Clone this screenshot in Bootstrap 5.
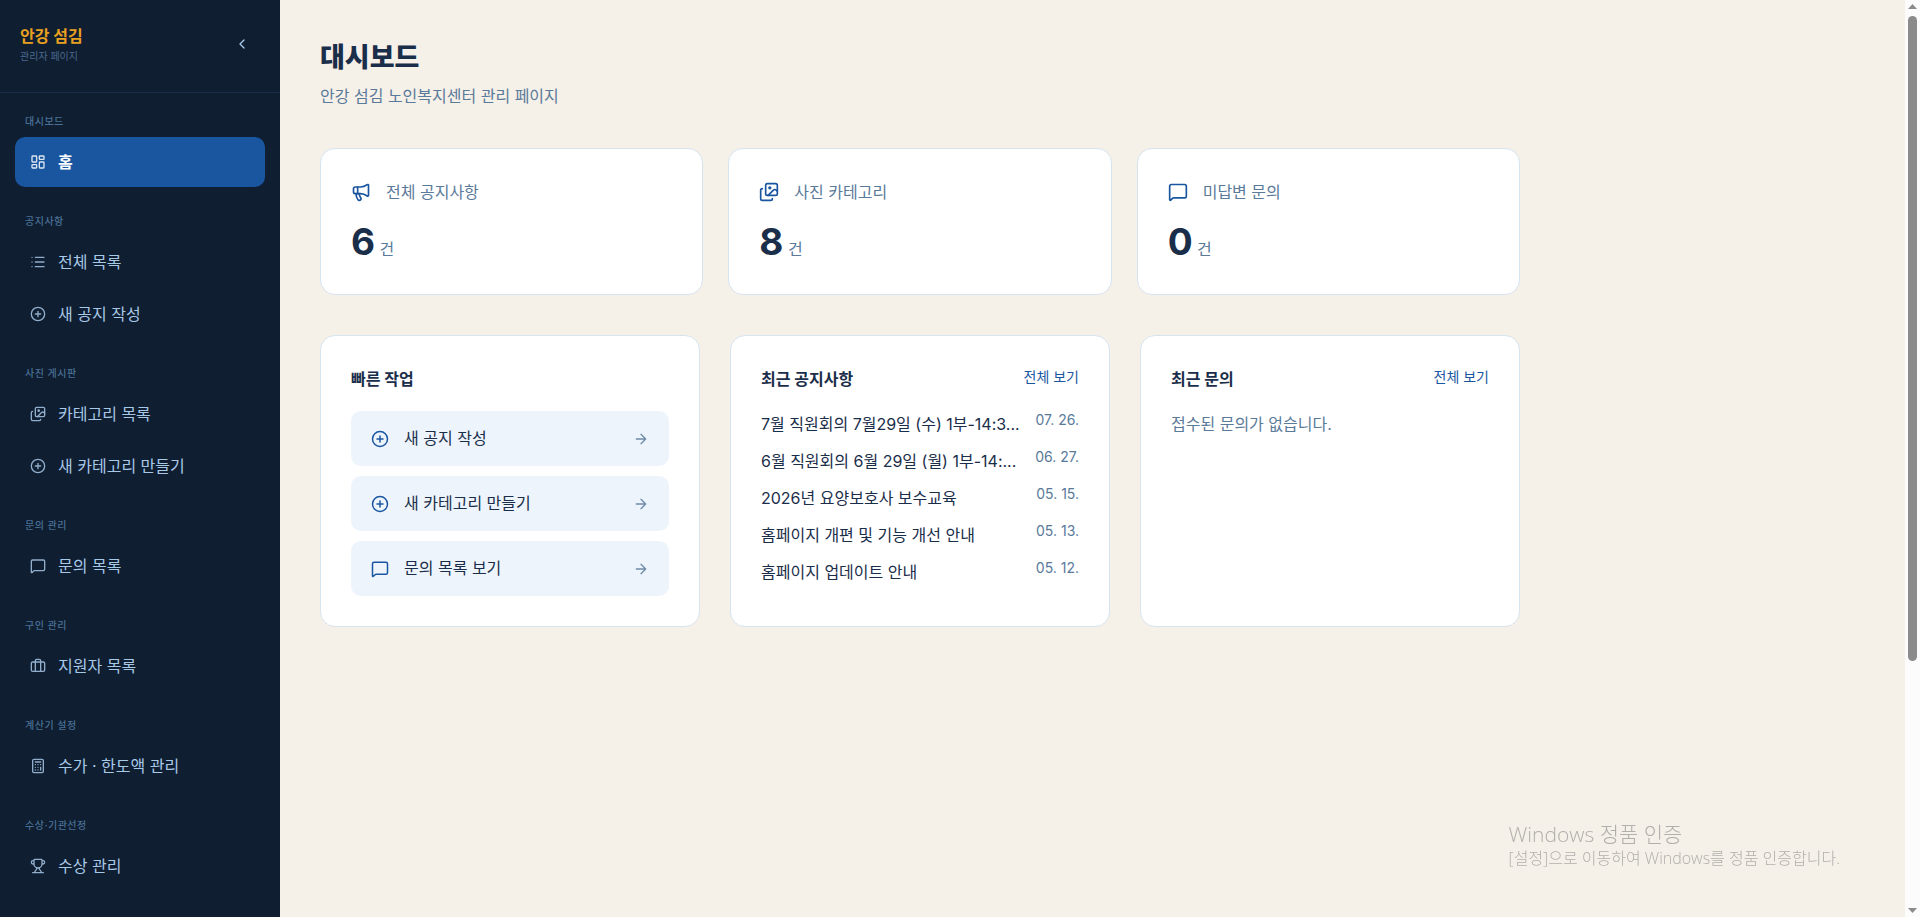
<!DOCTYPE html>
<html lang="ko">
<head>
<meta charset="utf-8">
<meta name="viewport" content="width=device-width, initial-scale=1">
<title>대시보드 - 안강 섬김</title>
<link href="https://cdn.jsdelivr.net/npm/bootstrap@5.3.0/dist/css/bootstrap.min.css" rel="stylesheet">
<style>
  :root { --navy: #1a2e4a; --blue: #1a56a0; --muted: #5a7a9a; --line: #d6e4f0; }
  body { background: #f5f0e8; color: var(--navy); font-family: Inter, "Noto Sans CJK KR", sans-serif; font-size: 16px; line-height: 27px; }
  a { text-decoration: none; }
  .ico { width: 18px; height: 18px; flex: none; fill: none; stroke: currentColor; stroke-width: 2; stroke-linecap: round; stroke-linejoin: round; }
  .ico-sm { width: 16px; height: 16px; }
  .ico-lg { width: 20px; height: 20px; }
  .text-soft { color: var(--muted); }
  .text-blue { color: var(--blue); }

  /* sidebar */
  .sidebar { width: 280px; background: #0f1e30; }
  .sidebar-head { padding: 24px 20px 28px; border-bottom: 1px solid var(--navy); }
  .brand-name { color: #e8a020; font-weight: 700; line-height: 24px; }
  .brand-sub { color: #4a6a90; font-size: 10px; line-height: 16px; }
  .collapse-btn { width: 36px; height: 36px; color: #a8c8e8; }
  .side-nav { padding: 20px 15px 0; }
  .nav-group { margin-bottom: 26px; }
  .nav-title { font-size: 10px; line-height: 16px; letter-spacing: .05em; color: #4a7096; padding-left: 10px; margin-bottom: 8px; font-weight: 500; }
  .side-link { height: 50px; padding: 0 15px; gap: 12px; border-radius: 10px; color: #a8c8e8; }
  .side-link + .side-link { margin-top: 2px; }
  .side-link.active { background: var(--blue); color: #fff; font-weight: 600; }
  .side-link .ico { opacity: .85; }

  /* content */
  .content { padding: 40px; }
  .page-title { font-size: 27px; line-height: 36px; font-weight: 800; margin-bottom: 7px; }
  .page-sub { margin-bottom: 38px; }
  .dash { max-width: 1200px; }
  .tiles { display: grid; grid-template-columns: repeat(3, minmax(0, 1fr)); }
  .tiles-stat { gap: 25px; margin-bottom: 40px; }
  .tiles-panel { gap: 30px; }
  .panel { background: #fff; border: 1px solid var(--line); border-radius: 15px; padding: 30px; }
  .stat-head { gap: 15px; line-height: 26px; margin-bottom: 14px; }
  .stat-num { font-size: 37px; line-height: 45px; font-weight: 700; }
  .panel-head { height: 28px; margin-bottom: 17px; }
  .panel-title { font-size: 16px; line-height: 27px; font-weight: 700; }
  .more-link { font-size: 14px; line-height: 22px; color: var(--blue); }
  .quick { height: 55px; padding: 0 20px; gap: 15px; background: #edf4fc; border-radius: 10px; color: var(--navy); }
  .quick .ms-auto { opacity: .85; }
  .quick-list, .notice-list { gap: 10px; }
  .notice-list a { color: var(--navy); }
  .notice-row { gap: 10px; }
  .notice-date { font-size: 14px; line-height: 18px; }

  /* window scrollbar and system notice */
  .scrollbar-track { width: 15px; background: #fcfcfc; padding: 4px 0; }
  .scrollbar-thumb { width: 9px; height: 71%; margin: 7px 0 auto; border-radius: 5px; background: #8b8b8b; }
  .activation { right: 80px; bottom: 48px; color: #b2b0ad; font-family: "Open Sans", "Noto Sans CJK KR", sans-serif; font-weight: 300; font-size: 16px; line-height: 22px; pointer-events: none; }
  .activation-title { font-size: 21px; line-height: 26px; }
</style>
</head>
<body>
<svg class="d-none" aria-hidden="true">
  <symbol id="i-dash" viewBox="0 0 24 24"><rect x="3" y="3" width="7" height="9" rx="1"/><rect x="14" y="3" width="7" height="5" rx="1"/><rect x="14" y="12" width="7" height="9" rx="1"/><rect x="3" y="16" width="7" height="5" rx="1"/></symbol>
  <symbol id="i-list" viewBox="0 0 24 24"><path d="M3 5h.01M3 12h.01M3 19h.01M8 5h13M8 12h13M8 19h13"/></symbol>
  <symbol id="i-plus" viewBox="0 0 24 24"><circle cx="12" cy="12" r="10"/><path d="M8 12h8M12 8v8"/></symbol>
  <symbol id="i-images" viewBox="0 0 24 24"><path d="m22 11-1.296-1.296a2.4 2.4 0 0 0-3.408 0L11 16"/><path d="M4 8a2 2 0 0 0-2 2v10a2 2 0 0 0 2 2h10a2 2 0 0 0 2-2"/><circle cx="13" cy="7" r="1" fill="currentColor"/><rect x="8" y="2" width="14" height="14" rx="2"/></symbol>
  <symbol id="i-msg" viewBox="0 0 24 24"><path d="M22 17a2 2 0 0 1-2 2H6.828a2 2 0 0 0-1.414.586l-2.202 2.202A.71.71 0 0 1 2 21.286V5a2 2 0 0 1 2-2h16a2 2 0 0 1 2 2z"/></symbol>
  <symbol id="i-case" viewBox="0 0 24 24"><path d="M16 20V4a2 2 0 0 0-2-2h-4a2 2 0 0 0-2 2v16"/><rect x="2" y="6" width="20" height="14" rx="2"/></symbol>
  <symbol id="i-calc" viewBox="0 0 24 24"><rect x="4" y="2" width="16" height="20" rx="2"/><path d="M8 6h8M16 14v4M16 10h.01M12 10h.01M8 10h.01M12 14h.01M8 14h.01M12 18h.01M8 18h.01"/></symbol>
  <symbol id="i-trophy" viewBox="0 0 24 24"><path d="M10 14.66v1.626a2 2 0 0 1-.976 1.696A5 5 0 0 0 7 21.978M14 14.66v1.626a2 2 0 0 0 .976 1.696A5 5 0 0 1 17 21.978M18 9h1.5a1 1 0 0 0 0-5H18M4 22h16M6 9a6 6 0 0 0 12 0V3a1 1 0 0 0-1-1H7a1 1 0 0 0-1 1zM6 9H4.5a1 1 0 0 1 0-5H6"/></symbol>
  <symbol id="i-mega" viewBox="0 0 24 24"><path d="M11 6a13 13 0 0 0 8.4-2.8A1 1 0 0 1 21 4v12a1 1 0 0 1-1.6.8A13 13 0 0 0 11 14H5a2 2 0 0 1-2-2V8a2 2 0 0 1 2-2z"/><path d="M6 14a12 12 0 0 0 2.4 7.2 2 2 0 0 0 3.2-2.4A8 8 0 0 1 10 14M8 6v8"/></symbol>
  <symbol id="i-arrow" viewBox="0 0 24 24"><path d="M5 12h14M12 5l7 7-7 7"/></symbol>
  <symbol id="i-chev" viewBox="0 0 24 24"><path d="m15 18-6-6 6-6"/></symbol>
</svg>

<div class="d-flex vh-100 overflow-hidden">
  <aside class="sidebar flex-shrink-0 overflow-hidden">
    <div class="sidebar-head d-flex justify-content-between align-items-center">
      <div>
        <div class="brand-name">안강 섬김</div>
        <div class="brand-sub">관리자 페이지</div>
      </div>
      <button type="button" class="collapse-btn btn border-0 p-0 d-flex align-items-center justify-content-center" aria-label="메뉴 접기"><svg class="ico ico-sm"><use href="#i-chev"/></svg></button>
    </div>
    <nav class="side-nav">
      <div class="nav-group">
        <div class="nav-title">대시보드</div>
        <a href="#" class="side-link active d-flex align-items-center" aria-current="page"><svg class="ico ico-sm"><use href="#i-dash"/></svg>홈</a>
      </div>
      <div class="nav-group">
        <div class="nav-title">공지사항</div>
        <a href="#" class="side-link d-flex align-items-center"><svg class="ico ico-sm"><use href="#i-list"/></svg>전체 목록</a>
        <a href="#" class="side-link d-flex align-items-center"><svg class="ico ico-sm"><use href="#i-plus"/></svg>새 공지 작성</a>
      </div>
      <div class="nav-group">
        <div class="nav-title">사진 게시판</div>
        <a href="#" class="side-link d-flex align-items-center"><svg class="ico ico-sm"><use href="#i-images"/></svg>카테고리 목록</a>
        <a href="#" class="side-link d-flex align-items-center"><svg class="ico ico-sm"><use href="#i-plus"/></svg>새 카테고리 만들기</a>
      </div>
      <div class="nav-group">
        <div class="nav-title">문의 관리</div>
        <a href="#" class="side-link d-flex align-items-center"><svg class="ico ico-sm"><use href="#i-msg"/></svg>문의 목록</a>
      </div>
      <div class="nav-group">
        <div class="nav-title">구인 관리</div>
        <a href="#" class="side-link d-flex align-items-center"><svg class="ico ico-sm"><use href="#i-case"/></svg>지원자 목록</a>
      </div>
      <div class="nav-group">
        <div class="nav-title">계산기 설정</div>
        <a href="#" class="side-link d-flex align-items-center"><svg class="ico ico-sm"><use href="#i-calc"/></svg>수가 · 한도액 관리</a>
      </div>
      <div class="nav-group">
        <div class="nav-title">수상·기관선정</div>
        <a href="#" class="side-link d-flex align-items-center"><svg class="ico ico-sm"><use href="#i-trophy"/></svg>수상 관리</a>
      </div>
    </nav>
  </aside>

  <main class="content flex-grow-1">
    <div class="dash">
      <h1 class="page-title">대시보드</h1>
      <p class="page-sub text-soft">안강 섬김 노인복지센터 관리 페이지</p>

      <section class="tiles tiles-stat">
        <div class="panel">
          <div class="stat-head d-flex align-items-center text-soft"><svg class="ico ico-lg text-blue"><use href="#i-mega"/></svg>전체 공지사항</div>
          <div><span class="stat-num">6</span> <span class="text-soft">건</span></div>
        </div>
        <div class="panel">
          <div class="stat-head d-flex align-items-center text-soft"><svg class="ico ico-lg text-blue"><use href="#i-images"/></svg>사진 카테고리</div>
          <div><span class="stat-num">8</span> <span class="text-soft">건</span></div>
        </div>
        <div class="panel">
          <div class="stat-head d-flex align-items-center text-soft"><svg class="ico ico-lg text-blue"><use href="#i-msg"/></svg>미답변 문의</div>
          <div><span class="stat-num">0</span> <span class="text-soft">건</span></div>
        </div>
      </section>

      <section class="tiles tiles-panel">
        <div class="panel">
          <div class="panel-head"><h2 class="panel-title mb-0">빠른 작업</h2></div>
          <div class="quick-list d-flex flex-column">
            <a href="#" class="quick d-flex align-items-center"><svg class="ico text-blue"><use href="#i-plus"/></svg>새 공지 작성<svg class="ico ico-sm text-soft ms-auto"><use href="#i-arrow"/></svg></a>
            <a href="#" class="quick d-flex align-items-center"><svg class="ico text-blue"><use href="#i-plus"/></svg>새 카테고리 만들기<svg class="ico ico-sm text-soft ms-auto"><use href="#i-arrow"/></svg></a>
            <a href="#" class="quick d-flex align-items-center"><svg class="ico text-blue"><use href="#i-msg"/></svg>문의 목록 보기<svg class="ico ico-sm text-soft ms-auto"><use href="#i-arrow"/></svg></a>
          </div>
        </div>
        <div class="panel">
          <div class="panel-head d-flex justify-content-between align-items-start">
            <h2 class="panel-title mb-0">최근 공지사항</h2><a href="#" class="more-link">전체 보기</a>
          </div>
          <ul class="notice-list list-unstyled d-flex flex-column mb-0">
            <li class="notice-row d-flex align-items-start justify-content-between"><a href="#" class="text-truncate">7월 직원회의 7월29일 (수) 1부-14:3...</a><span class="notice-date text-soft flex-shrink-0">07. 26.</span></li>
            <li class="notice-row d-flex align-items-start justify-content-between"><a href="#" class="text-truncate">6월 직원회의 6월 29일 (월) 1부-14:...</a><span class="notice-date text-soft flex-shrink-0">06. 27.</span></li>
            <li class="notice-row d-flex align-items-start justify-content-between"><a href="#" class="text-truncate">2026년 요양보호사 보수교육</a><span class="notice-date text-soft flex-shrink-0">05. 15.</span></li>
            <li class="notice-row d-flex align-items-start justify-content-between"><a href="#" class="text-truncate">홈페이지 개편 및 기능 개선 안내</a><span class="notice-date text-soft flex-shrink-0">05. 13.</span></li>
            <li class="notice-row d-flex align-items-start justify-content-between"><a href="#" class="text-truncate">홈페이지 업데이트 안내</a><span class="notice-date text-soft flex-shrink-0">05. 12.</span></li>
          </ul>
        </div>
        <div class="panel">
          <div class="panel-head d-flex justify-content-between align-items-start">
            <h2 class="panel-title mb-0">최근 문의</h2><a href="#" class="more-link">전체 보기</a>
          </div>
          <p class="text-soft mb-0">접수된 문의가 없습니다.</p>
        </div>
      </section>
    </div>
  </main>

  <div class="scrollbar-track d-flex flex-column align-items-center flex-shrink-0" aria-hidden="true">
    <svg width="9" height="5" viewBox="0 0 9 5" fill="#8b8b8b"><path d="M0 5 4.500 0 9 5z"/></svg>
    <div class="scrollbar-thumb"></div>
    <svg width="9" height="5" viewBox="0 0 9 5" fill="#8b8b8b"><path d="M0 0h9L4.500 5z"/></svg>
  </div>
</div>

<div class="activation position-fixed">
  <div class="activation-title">Windows 정품 인증</div>
  <div>[설정]으로 이동하여 Windows를 정품 인증합니다.</div>
</div>
<script src="https://cdn.jsdelivr.net/npm/bootstrap@5.3.0/dist/js/bootstrap.bundle.min.js"></script>
</body>
</html>
